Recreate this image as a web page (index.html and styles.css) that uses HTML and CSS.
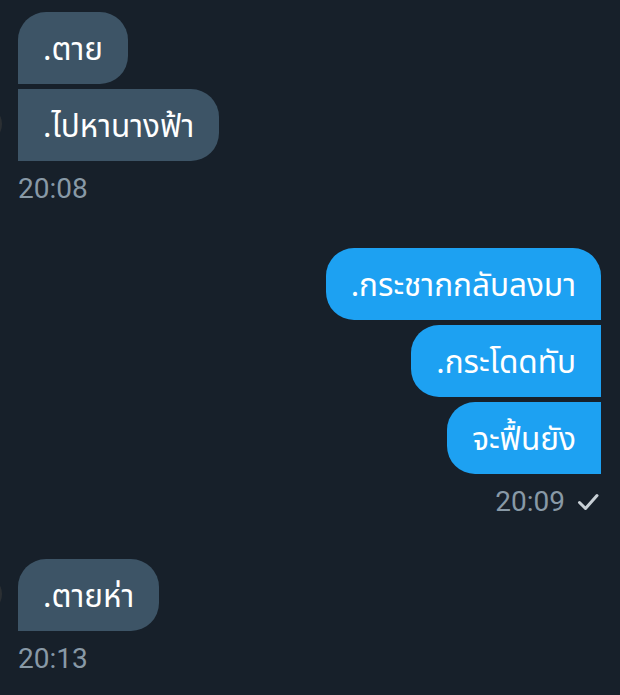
FILE: index.html
```
<!DOCTYPE html>
<html lang="th">
<head>
  <meta charset="UTF-8">
  <title>Messages</title>
  <meta name="viewport" content="width=device-width, initial-scale=1.0">
  <link rel="stylesheet" href="styles.css">
</head>
<body>
  <div class="chat">
    <!-- ข้อความจากอีกฝ่าย -->
    <div class="group in">
      <div class="avatar"></div>
      <div class="bubble first">.ตาย</div>
      <div class="bubble">.ไปหานางฟ้า</div>
      <div class="time">20:08</div>
    </div>

    <!-- ข้อความของเรา -->
    <div class="group out">
      <div class="bubble first">.กระชากกลับลงมา</div>
      <div class="bubble">.กระโดดทับ</div>
      <div class="bubble">จะฟื้นยัง</div>
      <div class="time">20:09
        <svg class="check" viewBox="0 0 24 24" width="24" height="24">
          <path d="M3.5 12.5l6 6L21 5.5" fill="none" stroke="currentColor" stroke-width="3" stroke-linecap="round" stroke-linejoin="round"/>
        </svg>
      </div>
    </div>

    <div class="group in">
      <div class="avatar"></div>
      <div class="bubble first">.ตายห่า</div>
      <div class="time">20:13</div>
    </div>
  </div>
</body>
</html>
```

FILE: styles.css
```
* {
  margin: 0;
  padding: 0;
  box-sizing: border-box;
}
body {
  background: #17202a;
  font-family: 'Noto Sans', 'Noto Sans Thai', sans-serif;
  overflow: hidden;
}
.chat {
  padding: 12px 19px 0 18px;
  display: flex;
  flex-direction: column;
}
.group {
  position: relative;
  display: flex;
  flex-direction: column;
  gap: 5px;
  margin-bottom: 43px;
}
.group.out {
  align-items: flex-end;
  margin-bottom: 41px;
}
.group.in {
  align-items: flex-start;
}
/* ส่วนของรูปโปรไฟล์ที่โผล่มานิดเดียว */
.avatar {
  position: absolute;
  left: -52px;
  bottom: 63px;
  width: 36px;
  height: 36px;
  border-radius: 50%;
  background: #2b2f33;
}
.bubble {
  height: 72px;
  padding: 0 25px;
  display: flex;
  align-items: center;
  font-size: 31.5px;
  line-height: 40px;
  color: #ffffff;
  white-space: nowrap;
}
.in .bubble {
  background: #3d5466;
  border-radius: 0 28px 28px 0;
}
.in .bubble.first {
  border-radius: 28px 28px 28px 0;
}
.out .bubble {
  background: #1da1f2;
  border-radius: 28px 0 0 28px;
}
.out .bubble.first {
  border-radius: 28px 28px 0 28px;
}
.time {
  height: 32px;
  margin-top: 7px;
  font-family: Roboto, sans-serif;
  font-size: 28px;
  line-height: 32px;
  color: #8899a6;
  display: flex;
  align-items: center;
  gap: 11px;
}
.check {
  color: #c8d0d6;
  margin-right: 1px;
}
```
